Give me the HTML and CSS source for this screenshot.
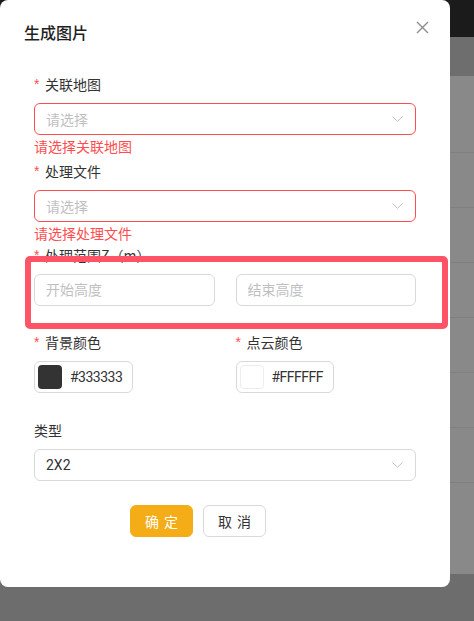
FILE: index.html
```html
<!DOCTYPE html>
<html lang="zh-CN">
<head>
  <meta charset="UTF-8" />
  <meta name="viewport" content="width=device-width, initial-scale=1.0"/>
  <title>生成图片</title>
  <link rel="stylesheet" href="styles.css">
</head>
<body>
  <div class="page">
    <div class="topbar"></div>
    <div class="thead"></div>
    <div class="tbody">
      <div class="trow first"></div>
      <div class="trow"></div>
      <div class="trow"></div>
      <div class="trow"></div>
      <div class="trow"></div>
      <div class="trow"></div>
      <div class="trow"></div>
      <div class="tfill"></div>
    </div>
    <div class="pager"></div>
  </div>

  <div class="modal">
    <div class="modal-head">
      <span class="modal-title">生成图片</span>
      <button class="close" type="button" aria-label="关闭">
        <svg width="13" height="13" viewBox="0 0 13 13"><path d="M1 1L12 12M12 1L1 12" stroke="#8c8c8c" stroke-width="1.4" fill="none"/></svg>
      </button>
    </div>

    <form class="form">
      <div class="item item-err">
        <label class="label req">关联地图</label>
        <div class="select error">
          <span class="ph">请选择</span>
          <svg class="arrow" width="11" height="6" viewBox="0 0 11 6"><path d="M0.5 0.5L5.5 5.3L10.5 0.5" stroke="#bfbfbf" stroke-width="1" fill="none"/></svg>
        </div>
        <div class="explain">请选择关联地图</div>
      </div>

      <div class="item item-err tight">
        <label class="label req">处理文件</label>
        <div class="select error">
          <span class="ph">请选择</span>
          <svg class="arrow" width="11" height="6" viewBox="0 0 11 6"><path d="M0.5 0.5L5.5 5.3L10.5 0.5" stroke="#bfbfbf" stroke-width="1" fill="none"/></svg>
        </div>
        <div class="explain">请选择处理文件</div>
      </div>

      <div class="item range">
        <label class="label req">处理范围Z（m）</label>
        <div class="cols">
          <input class="input" type="text" placeholder="开始高度">
          <input class="input" type="text" placeholder="结束高度">
        </div>
      </div>

      <div class="cols item colors">
        <div>
          <label class="label req">背景颜色</label>
          <div class="picker">
            <span class="swatch dark"></span>
            <span class="hex">#333333</span>
          </div>
        </div>
        <div>
          <label class="label req">点云颜色</label>
          <div class="picker">
            <span class="swatch light"></span>
            <span class="hex">#FFFFFF</span>
          </div>
        </div>
      </div>

      <div class="item">
        <label class="label">类型</label>
        <div class="select">
          <span class="val">2X2</span>
          <svg class="arrow" width="11" height="6" viewBox="0 0 11 6"><path d="M0.5 0.5L5.5 5.3L10.5 0.5" stroke="#bfbfbf" stroke-width="1" fill="none"/></svg>
        </div>
      </div>

      <div class="actions">
        <button class="btn primary" type="button"><span>确定</span></button>
        <button class="btn" type="button"><span>取消</span></button>
      </div>
    </form>
  </div>

  <div class="mark"></div>
</body>
</html>
```

FILE: styles.css
```css
body, html {
  margin: 0;
  padding: 0;
  font-family: Roboto, "Noto Sans CJK SC", sans-serif;
  font-size: 14px;
  color: #333;
  overflow: hidden;
}
.page {
  display: flex;
  flex-direction: column;
  height: 621px;
  background: #898989;
}
.topbar {
  height: 37px;
  background: #1b1b1b;
}
.thead {
  height: 39px;
  background: #6e6e6e;
}
.tbody {
  display: flex;
  flex-direction: column;
  flex: 1;
}
.trow {
  height: 54px;
  border-bottom: 1px solid #808080;
}
.trow.first {
  height: 76px;
}
.tfill {
  flex: 1;
}
.pager {
  height: 47px;
  background: #6d6d6d;
}
.modal {
  position: absolute;
  top: 0;
  left: 0;
  width: 450px;
  height: 587px;
  box-sizing: border-box;
  background: #fff;
  border-radius: 8px;
}
.modal-head {
  display: flex;
  justify-content: space-between;
  align-items: flex-start;
  height: 24px;
  padding: 20px 21px 0 24px;
}
.modal-title {
  font-family: "Noto Sans CJK SC", sans-serif;
  font-size: 16px;
  font-weight: 500;
  line-height: 24px;
  color: #1f1f1f;
}
.close {
  display: flex;
  margin-top: 1px;
  padding: 0;
  border: none;
  background: none;
}
.form {
  padding: 29px 34px 0;
}
.item {
  margin-bottom: 24px;
}
.item-err {
  margin-bottom: 3px;
}
.item-err.tight {
  margin-bottom: 0;
}
.item.range {
  margin-bottom: 25px;
}
.item.colors {
  margin-bottom: 26px;
}
.label {
  display: flex;
  align-items: center;
  height: 22px;
  margin-bottom: 8px;
  font-family: "Noto Sans CJK SC", sans-serif;
  color: #333;
}
.label.req::before {
  content: "*";
  width: 7px;
  margin-right: 4px;
  color: #ff4d4f;
  font-family: "Liberation Sans", sans-serif;
}
.select, .input {
  box-sizing: border-box;
  height: 32px;
  border: 1px solid #d9d9d9;
  border-radius: 6px;
  background: #fff;
}
.select {
  display: flex;
  align-items: center;
  justify-content: space-between;
  padding: 0 12px 0 11px;
}
.select.error {
  border-color: #ff4d4f;
}
.ph {
  color: #bfbfbf;
  font-family: "Noto Sans CJK SC", sans-serif;
}
.val {
  color: #333;
}
.explain {
  height: 22px;
  line-height: 22px;
  color: #ff4d4f;
  font-family: "Noto Sans CJK SC", sans-serif;
}
.cols {
  display: grid;
  grid-template-columns: 1fr 1fr;
  column-gap: 21px;
}
.input {
  display: block;
  width: 100%;
  padding: 0 11px;
  font: inherit;
  color: #333;
  outline: none;
}
.input::placeholder {
  color: #bfbfbf;
  font-family: "Noto Sans CJK SC", sans-serif;
}
.picker {
  display: inline-flex;
  align-items: center;
  gap: 8px;
  box-sizing: border-box;
  height: 32px;
  padding: 0 10px 0 3px;
  border: 1px solid #d9d9d9;
  border-radius: 6px;
  vertical-align: top;
}
.swatch {
  width: 24px;
  height: 24px;
  border-radius: 4px;
  box-sizing: border-box;
}
.swatch.dark {
  background: #333;
}
.swatch.light {
  background: #fff;
  border: 1px solid #ececec;
}
.hex {
  color: #333;
  letter-spacing: -0.5px;
}
.actions {
  display: flex;
  gap: 10px;
  padding-left: 96px;
}
.btn {
  display: inline-flex;
  align-items: center;
  justify-content: center;
  height: 32px;
  padding: 0 14px;
  border: 1px solid #d9d9d9;
  border-radius: 6px;
  background: #fff;
  color: #333;
  font-family: "Noto Sans CJK SC", sans-serif;
  font-size: 14px;
  white-space: nowrap;
}
.btn span {
  letter-spacing: 5px;
  margin-right: -5px;
}
.btn.primary {
  background: #f5ad17;
  border-color: #f5ad17;
  color: #fff;
}
.mark {
  position: absolute;
  left: 25px;
  top: 256px;
  width: 423px;
  height: 73px;
  box-sizing: border-box;
  border: 6px solid #ff5468;
  border-radius: 5px;
}
```
